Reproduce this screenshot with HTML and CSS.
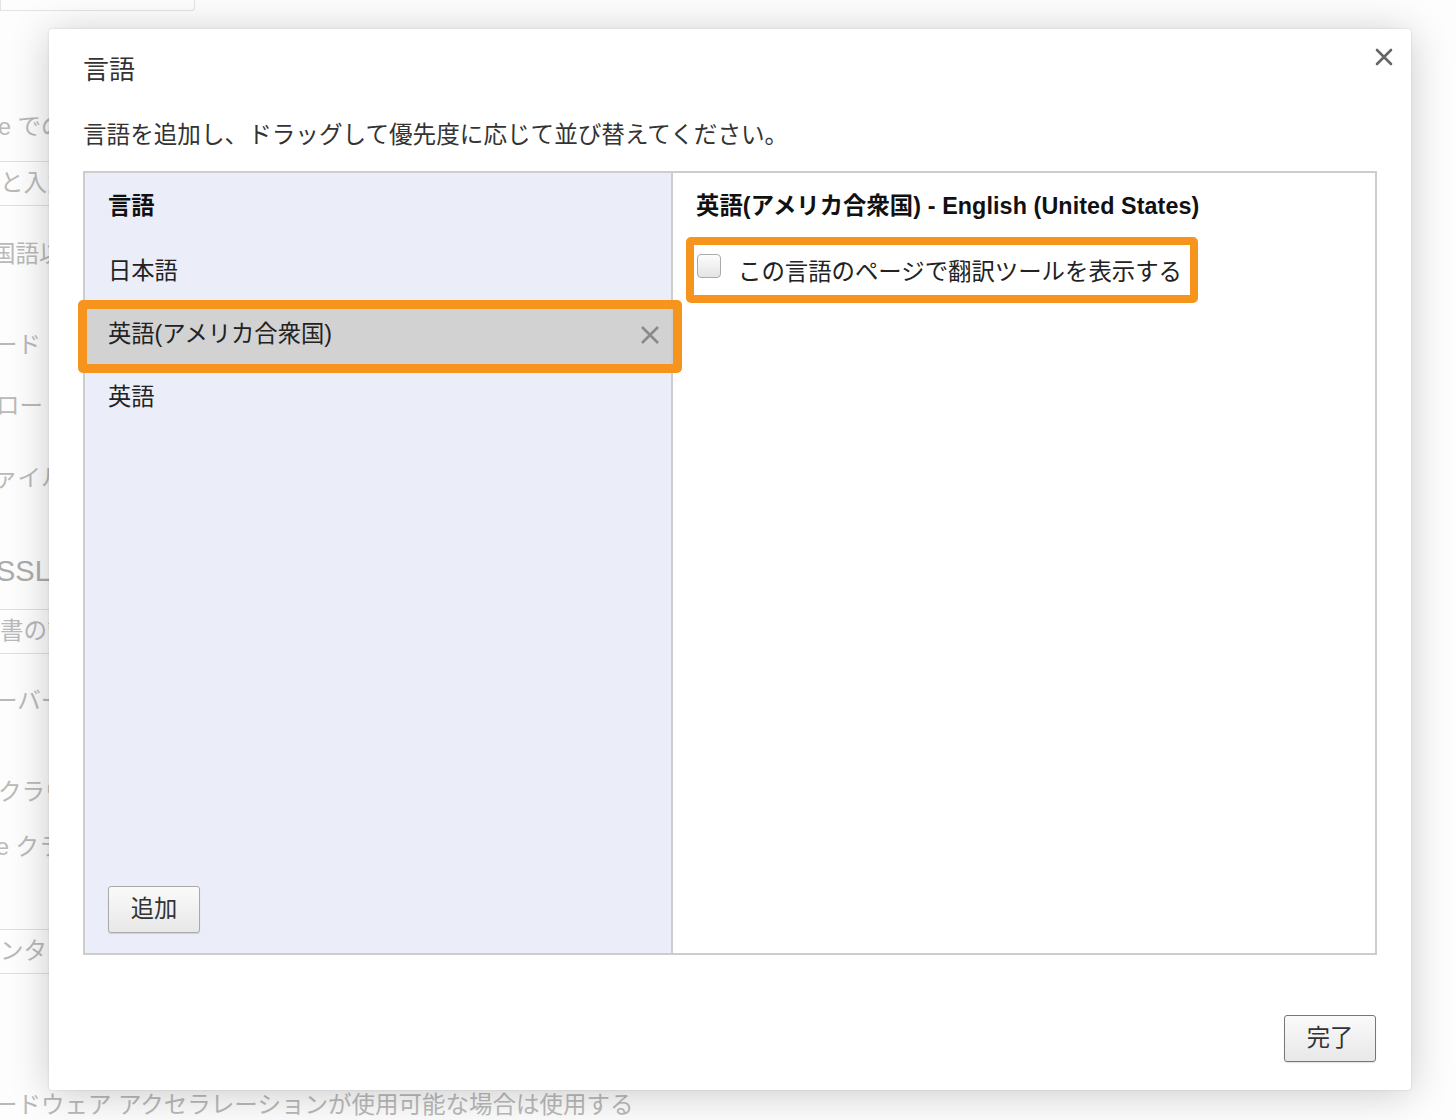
FILE: index.html
```html
<!DOCTYPE html>
<html lang="ja">
<head>
    <meta charset="UTF-8">
    <meta name="viewport" content="width=device-width, initial-scale=1.0">
    <title>言語</title>
    <link rel="stylesheet" href="styles.css">
</head>
<body>
  <!-- faded settings page behind the overlay -->
  <div class="page">
    <div class="bg-topbox"></div>
    <div class="bg-col">
      <div class="bg-line g1">e での</div>
      <div class="bg-box g2">と入力</div>
      <div class="bg-line g3">国語以</div>
      <div class="bg-line g4">ード</div>
      <div class="bg-line g5">ロー</div>
      <div class="bg-line g6">ァイル</div>
      <div class="bg-line bg-big g7">SSL</div>
      <div class="bg-box g8">書の管</div>
      <div class="bg-line g9">ーバー</div>
      <div class="bg-line g10">クラウ</div>
      <div class="bg-line g11">e クラ</div>
      <div class="bg-box g12">ンタを</div>
    </div>
    <div class="bg-line g13">ードウェア アクセラレーションが使用可能な場合は使用する</div>
  </div>

  <div class="dialog">
    <button class="close" type="button" aria-label="閉じる">
      <svg width="18" height="18" viewBox="0 0 18 18"><path d="M2 2 L16 16 M16 2 L2 16" stroke="#666" stroke-width="2.6" stroke-linecap="round"/></svg>
    </button>
    <h1 class="title">言語</h1>
    <p class="desc">言語を追加し、ドラッグして優先度に応じて並び替えてください。</p>

    <div class="panels">
      <div class="lang-list">
        <div class="list-head">言語</div>
        <div class="lang-item">日本語</div>
        <div class="lang-item selected">
          英語(アメリカ合衆国)
          <svg class="remove" width="20" height="20" viewBox="0 0 20 20"><path d="M2 2 L18 18 M18 2 L2 18" stroke="#8a8a8a" stroke-width="2.6"/></svg>
        </div>
        <div class="lang-item">英語</div>
        <div class="spacer"></div>
        <button class="btn add" type="button">追加</button>
      </div>
      <div class="lang-detail">
        <div class="detail-head">英語(アメリカ合衆国) - English (United States)</div>
        <label class="translate">
          <span class="check"></span>
          <span>この言語のページで翻訳ツールを表示する</span>
        </label>
      </div>
    </div>

    <div class="footer">
      <button class="btn done" type="button">完了</button>
    </div>
  </div>
</body>
</html>
```

FILE: styles.css
```css
html, body {
  margin: 0;
  padding: 0;
}

body {
  width: 1456px;
  height: 1120px;
  overflow: hidden;
  position: relative;
  background: #fdfdfd;
  font-family: "Liberation Sans", "Noto Sans CJK JP", sans-serif;
  color: #333;
}

/* background page */
.page {
  display: flex;
  flex-direction: column;
  color: #b9b9b9;
  font-size: 23.5px;
}

.bg-topbox {
  width: 195px;
  height: 11px;
  border: 1px solid #e3e3e3;
  border-top: none;
  border-radius: 0 0 4px 0;
  box-sizing: border-box;
}

.bg-col {
  width: 49px;
  overflow: hidden;
  display: flex;
  flex-direction: column;
}

.bg-line {
  height: 24px;
  line-height: 24px;
  white-space: nowrap;
}

.bg-big {
  font-size: 29px;
  height: 30px;
  line-height: 30px;
  color: #acacac;
  margin-left: -4px;
}

.bg-box {
  width: 60px;
  height: 45px;
  line-height: 43px;
  box-sizing: border-box;
  border-top: 1px solid #e0e0e0;
  border-bottom: 1px solid #e0e0e0;
  white-space: nowrap;
}

.g1 { margin-top: 104px; margin-left: -2px; }
.g2 { margin-top: 22px; }
.g3 { margin-top: 36px; margin-left: -8px; }
.g4 { margin-top: 67px; margin-left: -6px; }
.g5 { margin-top: 37px; margin-left: -4px; }
.g6 { margin-top: 48px; margin-left: -6px; }
.g7 { margin-top: 66px; }
.g8 { margin-top: 23px; }
.g9 { margin-top: 35px; margin-left: -6px; }
.g10 { margin-top: 67px; margin-left: -2px; }
.g11 { margin-top: 31px; margin-left: -4px; }
.g12 { margin-top: 70px; }
.g13 { margin-top: 119px; margin-left: -6px; }

/* dialog */
.dialog {
  position: absolute;
  left: 49px;
  top: 29px;
  width: 1362px;
  height: 1061px;
  box-sizing: border-box;
  padding: 26px 34px 28px 34px;
  background: #fff;
  border-radius: 3px;
  box-shadow: 0 4px 40px rgba(0, 0, 0, 0.2), 0 0 2px rgba(0, 0, 0, 0.15);
  display: flex;
  flex-direction: column;
}

.close {
  position: absolute;
  top: 16px;
  right: 15px;
  width: 24px;
  height: 24px;
  padding: 3px;
  border: none;
  background: none;
  cursor: pointer;
}

.title {
  margin: 0;
  font-size: 26px;
  font-weight: normal;
  line-height: 30px;
  color: #333;
}

.desc {
  margin: 38px 0 0 0;
  font-size: 23.6px;
  line-height: 24px;
  color: #333;
}

.panels {
  margin-top: 24px;
  height: 784px;
  box-sizing: border-box;
  border: 2px solid #cdcdcd;
  display: flex;
}

.lang-list {
  width: 586px;
  background: #ebeef8;
  border-right: 2px solid #cdcdcd;
  display: flex;
  flex-direction: column;
  font-size: 23.3px;
  color: #222;
}

.list-head {
  height: 67px;
  line-height: 67px;
  padding-left: 23px;
  font-weight: bold;
  color: #111;
}

.lang-item {
  height: 63px;
  line-height: 63px;
  padding-left: 23px;
  position: relative;
  white-space: nowrap;
}

.lang-item.selected {
  background: #d2d2d2;
}

.lang-item.selected::after {
  content: "";
  position: absolute;
  left: -7px;
  right: -11px;
  top: -3px;
  bottom: -7px;
  border: 9px solid #f7941d;
  border-radius: 5px;
}

.remove {
  position: absolute;
  right: 11px;
  top: 22px;
}

.spacer {
  flex: 1;
}

.btn {
  font-family: "Liberation Sans", "Noto Sans CJK JP", sans-serif;
  font-size: 23.3px;
  color: #333;
  width: 92px;
  height: 47px;
  padding: 0 0 5px 0;
  border: 1px solid #a9a9a9;
  border-radius: 3px;
  background: linear-gradient(#fafafa, #e8e8e8);
  box-shadow: 0 1px 1px rgba(0, 0, 0, 0.12);
  cursor: pointer;
}

.add {
  margin: 0 0 20px 23px;
}

.lang-detail {
  flex: 1;
  background: #fff;
  padding-left: 23px;
}

.detail-head {
  height: 67px;
  line-height: 67px;
  font-size: 23.3px;
  font-weight: bold;
  color: #111;
  white-space: nowrap;
  letter-spacing: 0.1px;
}

.translate {
  display: inline-flex;
  align-items: center;
  margin: -3px 0 0 -10px;
  height: 66px;
  box-sizing: border-box;
  border: 8px solid #f7941d;
  border-radius: 5px;
  padding: 0 8px 0 3px;
  font-size: 23.4px;
  color: #222;
  white-space: nowrap;
}

.check {
  width: 22px;
  height: 22px;
  border: 1px solid #aaa;
  border-radius: 4px;
  background: linear-gradient(#fdfdfd, #e4e4e4);
  margin: -8px 17px 0 0;
}

.footer {
  margin-top: auto;
  display: flex;
  justify-content: flex-end;
  padding-right: 1px;
}

.done {
  border-color: #777;
}
```
